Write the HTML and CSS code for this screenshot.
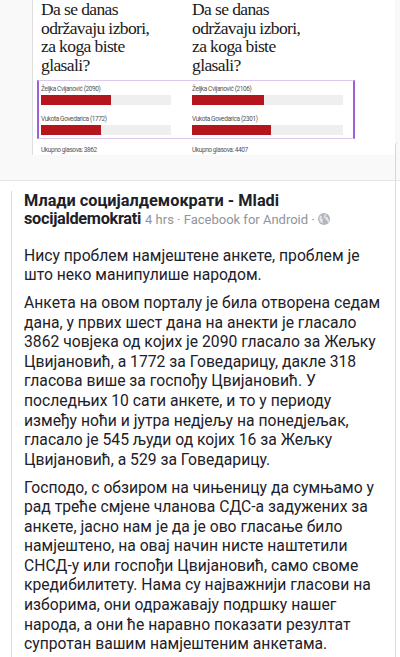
FILE: index.html
```html
<!DOCTYPE html>
<html lang="sr">
<head>
    <meta charset="UTF-8">
    <meta name="viewport" content="width=device-width, initial-scale=1.0">
    <title>Post</title>
    <link rel="stylesheet" href="styles.css">
</head>
<body>
    <div class="shot">
        <div class="shot-img">
            <div class="poll poll-left">
                <div class="poll-title">Da se danas<br>održavaju izbori,<br>za koga biste<br>glasali?</div>
                <div class="poll-box">
                    <div class="poll-row">
                        <div class="poll-label">Željka Cvijanović (2090)</div>
                        <div class="poll-track"><div class="poll-fill" style="width: 54.1%"></div></div>
                    </div>
                    <div class="poll-row">
                        <div class="poll-label">Vukota Govedarica (1772)</div>
                        <div class="poll-track"><div class="poll-fill" style="width: 45.9%"></div></div>
                    </div>
                </div>
                <div class="poll-total">Ukupno glasova: 3862</div>
            </div>
            <div class="poll poll-right">
                <div class="poll-title">Da se danas<br>održavaju izbori,<br>za koga biste<br>glasali?</div>
                <div class="poll-box">
                    <div class="poll-row">
                        <div class="poll-label">Željka Cvijanović (2106)</div>
                        <div class="poll-track"><div class="poll-fill" style="width: 47.8%"></div></div>
                    </div>
                    <div class="poll-row">
                        <div class="poll-label">Vukota Govedarica (2301)</div>
                        <div class="poll-track"><div class="poll-fill" style="width: 52.2%"></div></div>
                    </div>
                </div>
                <div class="poll-total">Ukupno glasova: 4407</div>
            </div>
        </div>
        <div class="shot-edge"></div>
    </div>

    <div class="post">
        <div class="post-inner">
            <div class="post-title">
                <div class="name">Млади социјалдемократи - Mladi</div>
                <div class="name-line">
                    <span class="name">socijaldemokrati</span>
                    <span class="meta">4 hrs · Facebook for Android ·
                        <svg class="globe" width="12" height="12" viewBox="0 0 16 16">
                            <circle cx="8" cy="8" r="8" fill="#b3b7bc"/>
                            <path d="M3 3.2c1.2.3 2 .9 2.3 1.9.2.8-.6 1.3-.3 2.2.3.8 1.4.8 1.6 1.7.2 1-.6 1.7-.4 2.8.1.7.5 1.3.3 2-1.8-.5-3.4-1.8-4.1-3.6C1.6 8.4 1.9 5.3 3 3.2z" fill="#e3e5e8"/>
                            <path d="M8.6 1.4c1.4.2 2.3.8 3 1.6-.5.6-1.4.4-1.9 1-.4.5.1 1.2.7 1.4.9.3 1.9-.1 2.6.5.8.7.3 1.9.8 2.7.3.5.9.6 1.3.3-.2 1.4-.9 2.7-1.9 3.6-.5-.7-.2-1.7-.8-2.3-.6-.5-1.5-.2-2-.8-.6-.7 0-1.8-.5-2.5-.5-.6-1.5-.4-2-1-.4-.5-.1-1.2.2-1.8.2-.3.3-.5.5-.7z" fill="#e3e5e8"/>
                        </svg>
                    </span>
                </div>
            </div>
            <div class="post-text">
                <p>Нису проблем намјештене анкете, проблем је<br>што неко манипулише народом.</p>
                <p>Анкета на овом порталу је била отворена седам<br>дана, у првих шест дана на анекти је гласало<br>3862 човјека од којих је 2090 гласало за Жељку<br>Цвијановић, а 1772 за Говедарицу, дакле 318<br>гласова више за госпођу Цвијановић. У<br>последњих 10 сати анкете, и то у периоду<br>између ноћи и јутра недјељу на понедјељак,<br>гласало је 545 људи од којих 16 за Жељку<br>Цвијановић, а 529 за Говедарицу.</p>
                <p>Господо, с обзиром на чињеницу да сумњамо у<br>рад треће смјене чланова СДС-а задужених за<br>анкете, јасно нам је да је ово гласање било<br>намјештено, на овај начин нисте наштетили<br>СНСД-у или госпођи Цвијановић, само своме<br>кредибилитету. Нама су најважнији гласови на<br>изборима, они одражавају подршку нашег<br>народа, а они ће наравно показати резултат<br>супротан вашим намјештеним анкетама.</p>
            </div>
        </div>
    </div>
</body>
</html>
```

FILE: styles.css
```css
html, body {
    overflow: hidden;
}
body {
    margin: 0;
    padding: 0;
    background-color: #fff;
    font-family: Roboto, "Noto Sans", Arial, sans-serif;
    color: #1d2129;
}

/* shared screenshot of the two polls */
.shot {
    display: flex;
    height: 180px;
    padding-left: 32px;
    background-color: #f9f9f9;
    border-bottom: 1px solid #e6e6e6;
}
.shot-img {
    display: flex;
    align-items: flex-start;
    width: 362px;
    height: 155px;
    border-left: 1px solid #dedede;
    background-color: #fff;
    overflow: hidden;
}
.shot-edge {
    margin-top: 142px;
    width: 4px;
    border-left: 1px solid #d6d6d6;
    border-top-left-radius: 4px;
}
.poll-left {
    width: 151px;
}
.poll-right {
    width: 171px;
}
.poll-title {
    padding-left: 8px;
    font-family: "Liberation Serif", "DejaVu Serif", serif;
    font-size: 17.5px;
    line-height: 18.5px;
    letter-spacing: -0.6px;
    color: #1a1a1a;
    white-space: nowrap;
}
.poll-box {
    margin-top: 6px;
    padding: 3px 0 3px 0;
    border-top: 1px solid #dac8ee;
    border-bottom: 1px solid #dac8ee;
}
.poll-left .poll-box {
    margin-left: 4px;
    padding-left: 2px;
    padding-right: 13px;
    border-left: 2px solid #9d60d8;
}
.poll-right .poll-box {
    padding-left: 8px;
    padding-right: 10px;
    border-right: 2px solid #9d60d8;
}
.poll-row + .poll-row {
    margin-top: 9px;
}
.poll-label,
.poll-total {
    font-size: 6.5px;
    line-height: 10px;
    letter-spacing: -0.4px;
    color: #555;
    white-space: nowrap;
}
.poll-track {
    margin-top: 1px;
    height: 10px;
    background-color: #efefef;
}
.poll-fill {
    height: 100%;
    background-color: #b5151c;
}
.poll-total {
    margin-top: 6px;
    padding-left: 8px;
}

/* facebook post */
.post {
    margin-right: 4px;
    padding-top: 10px;
    border-right: 1px solid #dcdcdc;
}
.post-inner {
    margin-left: 11px;
    padding: 1px 12px 10px 12px;
    border-left: 1px solid #dcdcdc;
}
.post-title {
    font-size: 16.3px;
    line-height: 18px;
}
.post-title .name {
    font-weight: bold;
}
.name-line .name {
    letter-spacing: -0.3px;
}
.post-title .meta {
    font-size: 13px;
    color: #90949c;
}
.globe {
    vertical-align: -1px;
}
.post-text {
    margin-top: 16.8px;
}
.post-text p {
    margin: 0 0 8.1px 0;
    font-size: 15.7px;
    line-height: 19.6px;
    white-space: nowrap;
}
```
